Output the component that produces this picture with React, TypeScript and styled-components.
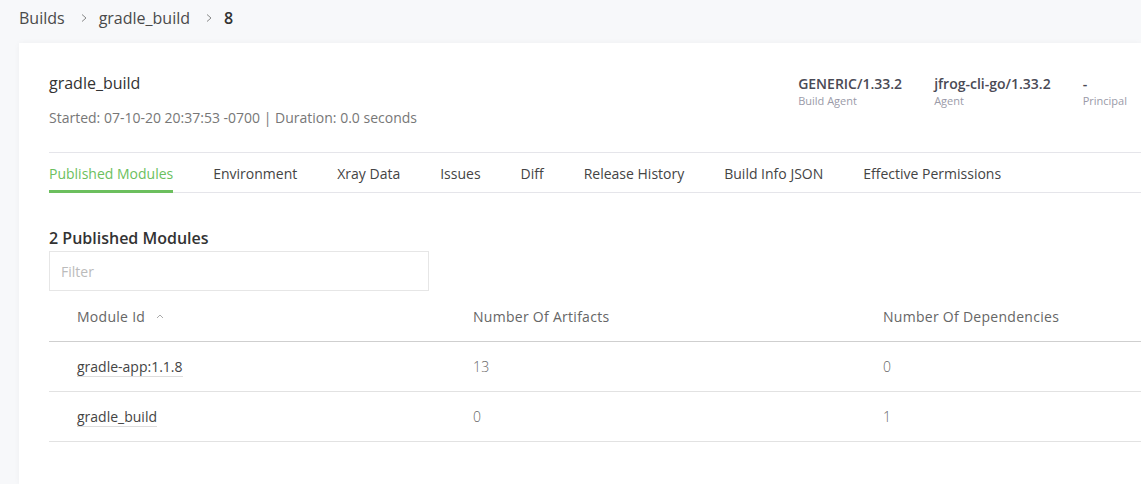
import React from "react";
import styled, { createGlobalStyle } from "styled-components";

const Global = createGlobalStyle`
  html, body { margin: 0; padding: 0; background: #f7f8fa; overflow: hidden; }
  body { font-family: "Open Sans", "Noto Sans", sans-serif; color: #333; }
  * { box-sizing: border-box; }
`;

const Page = styled.div`
  width: 1141px;
  height: 484px;
  display: flex;
  flex-direction: column;
  padding-left: 19px;
`;

const Crumbs = styled.nav`
  height: 43px;
  display: flex;
  align-items: center;
  padding-bottom: 7px;
  font-size: 16px;
  color: #444;
`;

const Crumb = styled.span<{ $current?: boolean }>`
  font-weight: ${(p) => (p.$current ? 600 : 400)};
  color: ${(p) => (p.$current ? "#333" : "#4a4a4a")};
`;

const Sep = styled.span`
  display: inline-flex;
  align-items: center;
  margin: 0 11px 0 15px;
  color: #888;
`;

const Card = styled.section`
  flex: 1;
  background: #fff;
  box-shadow: 0 0 6px rgba(0, 0, 0, 0.04);
  padding: 30px 0 0 30px;
  display: flex;
  flex-direction: column;
`;

const Header = styled.div`
  display: flex;
  justify-content: space-between;
  align-items: flex-start;
  padding-right: 14px;
  height: 80px;
  border-bottom: 1px solid #e5e5ea;
`;

const TitleBlock = styled.div`
  display: flex;
  flex-direction: column;
`;

const Title = styled.h1`
  margin: 0;
  font-size: 16px;
  font-weight: 400;
  line-height: 20px;
  color: #333;
`;

const Sub = styled.div`
  margin-top: 15px;
  font-size: 14px;
  line-height: 20px;
  color: #777;
`;

const Meta = styled.div`
  display: flex;
  gap: 32px;
  padding-top: 2px;
`;

const MetaItem = styled.div`
  display: flex;
  flex-direction: column;
`;

const MetaValue = styled.div`
  font-size: 14px;
  font-weight: 600;
  line-height: 18px;
  color: #4a4a55;
`;

const MetaLabel = styled.div`
  font-size: 11px;
  line-height: 15px;
  color: #9a9aa8;
`;

const Tabs = styled.div`
  display: flex;
  gap: 40px;
  border-bottom: 1px solid #e5e5ea;
  height: 40px;
`;

const Tab = styled.div<{ $active?: boolean }>`
  font-size: 14px;
  line-height: 20px;
  padding-top: 11px;
  color: ${(p) => (p.$active ? "#6cbf5e" : "#444")};
  border-bottom: 3px solid ${(p) => (p.$active ? "#6cbf5e" : "transparent")};
  margin-bottom: -1px;
`;

const Section = styled.div`
  display: flex;
  flex-direction: column;
  padding-top: 35px;
`;

const SectionTitle = styled.h2`
  margin: 0;
  font-size: 16px;
  font-weight: 600;
  line-height: 20px;
  color: #333;
`;

const Filter = styled.input`
  margin-top: 3px;
  width: 380px;
  height: 40px;
  border: 1px solid #e6e6e6;
  padding: 0 11px;
  font-family: inherit;
  font-size: 14px;
  color: #333;
  outline: none;
  &::placeholder { color: #bbb; }
`;

const Table = styled.div`
  display: flex;
  flex-direction: column;
  width: 1092px;
`;

const Row = styled.div<{ $head?: boolean }>`
  display: grid;
  grid-template-columns: 396px 410px 1fr;
  height: ${(p) => (p.$head ? "51px" : "50px")};
  align-items: center;
  border-bottom: 1px solid ${(p) => (p.$head ? "#cfcfcf" : "#e2e2e2")};
`;

const HeadCell = styled.div`
  padding-left: 28px;
  font-size: 14px;
  letter-spacing: 0.28px;
  color: #666;
  display: flex;
  align-items: center;
  gap: 10px;
`;

const Cell = styled.div`
  padding-left: 28px;
  font-size: 14px;
  font-weight: 300;
  letter-spacing: 0.2px;
  color: #666;
`;

const LinkCell = styled.span`
  font-size: 14px;
  font-weight: 400;
  letter-spacing: 0;
  color: #444;
  border-bottom: 1px solid #ddd;
  line-height: 17px;
`;

const Chevron = () => (
  <svg width="8" height="10" viewBox="0 0 8 10" fill="none">
    <path d="M2 1.5 L6 5 L2 8.5" stroke="#888" strokeWidth="1" />
  </svg>
);

const SortUp = () => (
  <svg width="10" height="6" viewBox="0 0 10 6" fill="none">
    <path d="M2 5 L5 2 L8 5" stroke="#aaa" strokeWidth="1" />
  </svg>
);

const tabs = [
  "Published Modules",
  "Environment",
  "Xray Data",
  "Issues",
  "Diff",
  "Release History",
  "Build Info JSON",
  "Effective Permissions",
];

const rows = [
  { id: "gradle-app:1.1.8", artifacts: "13", deps: "0" },
  { id: "gradle_build", artifacts: "0", deps: "1" },
];

export default function App() {
  return (
    <>
      <Global />
      <Page>
        <Crumbs>
          <Crumb>Builds</Crumb>
          <Sep><Chevron /></Sep>
          <Crumb>gradle_build</Crumb>
          <Sep><Chevron /></Sep>
          <Crumb $current>8</Crumb>
        </Crumbs>
        <Card>
          <Header>
            <TitleBlock>
              <Title>gradle_build</Title>
              <Sub>Started: 07-10-20 20:37:53 -0700 | Duration: 0.0 seconds</Sub>
            </TitleBlock>
            <Meta>
              <MetaItem>
                <MetaValue>GENERIC/1.33.2</MetaValue>
                <MetaLabel>Build Agent</MetaLabel>
              </MetaItem>
              <MetaItem>
                <MetaValue>jfrog-cli-go/1.33.2</MetaValue>
                <MetaLabel>Agent</MetaLabel>
              </MetaItem>
              <MetaItem>
                <MetaValue>-</MetaValue>
                <MetaLabel>Principal</MetaLabel>
              </MetaItem>
            </Meta>
          </Header>
          <Tabs>
            {tabs.map((t, i) => (
              <Tab key={t} $active={i === 0}>{t}</Tab>
            ))}
          </Tabs>
          <Section>
            <SectionTitle>2 Published Modules</SectionTitle>
            <Filter placeholder="Filter" />
            <Table>
              <Row $head>
                <HeadCell>Module Id <SortUp /></HeadCell>
                <HeadCell>Number Of Artifacts</HeadCell>
                <HeadCell>Number Of Dependencies</HeadCell>
              </Row>
              {rows.map((r) => (
                <Row key={r.id}>
                  <Cell><LinkCell>{r.id}</LinkCell></Cell>
                  <Cell>{r.artifacts}</Cell>
                  <Cell>{r.deps}</Cell>
                </Row>
              ))}
            </Table>
          </Section>
        </Card>
      </Page>
    </>
  );
}
